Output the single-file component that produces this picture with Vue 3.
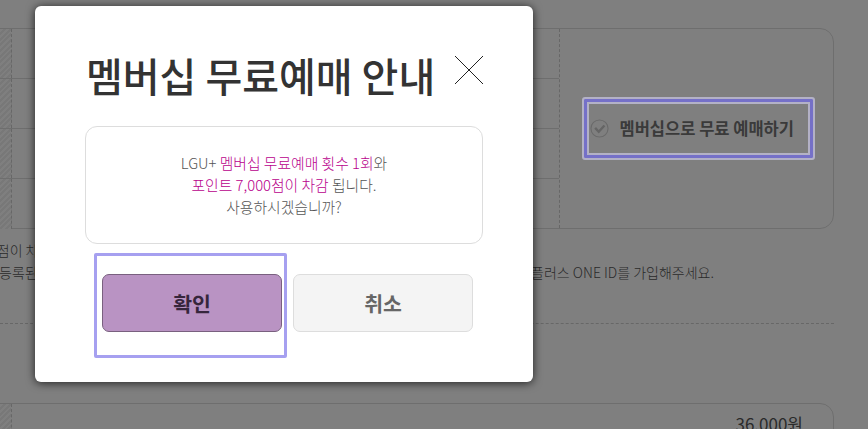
<script setup>
const rows = [0, 1, 2, 3]
</script>

<template>
  <div class="page">
    <section class="card top-card">
      <div class="table-col">
        <div v-for="r in rows" :key="r" class="row">
          <span class="hatch"></span>
          <span class="cell"></span>
        </div>
      </div>
      <div class="action-col">
        <button class="member-btn" type="button">
          <svg class="check" width="19" height="19" viewBox="0 0 20 20" fill="none">
            <circle cx="10" cy="10" r="9" stroke="#d4d4d4" stroke-width="1.2" />
            <path d="M5.4 9.4 L9.2 13.4 L15.2 6.8" stroke="#cacaca" stroke-width="2.6" />
          </svg>
          <span>멤버십으로 무료 예매하기</span>
        </button>
      </div>
    </section>

    <div class="notes">
      <p class="note-first">사용점이 차감됩니다.</p>
      <p class="note-second">
        <span>등록된 정보가 없는 경우</span>
        <span>엘지유플러스 ONE ID를 가입해주세요.</span>
      </p>
    </div>

    <div class="divider"></div>

    <section class="card price-card">
      <span class="hatch short"></span>
      <span class="price">36,000원</span>
    </section>

    <div class="backdrop"></div>

    <div class="modal">
      <header class="modal-head">
        <h2>멤버십 무료예매 안내</h2>
        <svg class="close" width="30" height="30" viewBox="0 0 30 30" fill="none">
          <path d="M1 1 L29 29 M29 1 L1 29" stroke="#222" stroke-width="1" />
        </svg>
      </header>
      <div class="message">
        <p>LGU+ <em>멤버십 무료예매 횟수 1회</em>와</p>
        <p><em>포인트 7,000점이 차감</em> 됩니다.</p>
        <p>사용하시겠습니까?</p>
      </div>
      <div class="actions">
        <div class="focus-ring">
          <button class="btn confirm" type="button">확인</button>
        </div>
        <button class="btn cancel" type="button">취소</button>
      </div>
    </div>
  </div>
</template>

<style>
html, body { margin: 0; background: #808080; }
</style>

<style scoped>
.page {
  position: relative;
  width: 868px;
  height: 429px;
  overflow: hidden;
  background: #fff;
  font-family: "Noto Sans CJK KR", "Noto Sans", sans-serif;
  color: #333;
  padding-top: 28px;
  box-sizing: border-box;
}
.card {
  box-sizing: border-box;
  width: 854px;
  margin-left: -20px;
  border: 1px solid #dcdcdc;
  border-radius: 14px;
}
.top-card {
  display: flex;
  height: 201px;
}
.table-col {
  width: 578px;
  flex: none;
}
.row {
  display: flex;
  height: 50px;
  box-sizing: border-box;
  border-bottom: 1px solid #dcdcdc;
}
.row:last-child { border-bottom: 0; }
.hatch {
  width: 30px;
  flex: none;
  border-right: 1px dashed #cfcfcf;
  background: repeating-linear-gradient(135deg, #f0f0f0 0 2px, #fff 2px 4px);
}
.cell { flex: 1; }
.action-col {
  flex: 1;
  display: flex;
  align-items: center;
  justify-content: center;
  border-left: 1px dashed #cfcfcf;
  padding-left: 3px;
}
.member-btn {
  position: relative;
  display: flex;
  align-items: center;
  gap: 11px;
  box-sizing: border-box;
  width: 219px;
  height: 49px;
  margin-top: -1px;
  padding: 0 0 0 1px;
  background: #fff;
  border: 0;
  font: 700 16.5px "Noto Sans CJK KR", sans-serif;
  color: #747474;
}
.member-btn::after {
  content: "";
  position: absolute;
  inset: -7px;
  z-index: 2;
  border: 2px solid #b3b1c6;
  border-radius: 3px;
  box-shadow: inset 0 0 0 3px #7570c8, inset 0 0 0 5px #b3b1c6;
}
.check { flex: none; }
.notes {
  margin: 10px 0 0;
  font-size: 14px;
  font-weight: 300;
  color: #555;
  line-height: 22px;
}
.notes p { margin: 0; white-space: nowrap; }
.note-first { margin-left: -29px !important; }
.note-second {
  display: flex;
  justify-content: space-between;
  width: 715px;
  margin-left: -1px !important;
}
.divider {
  margin-top: 40px;
  width: 834px;
  border-top: 1px dashed #cfcfcf;
}
.price-card {
  position: relative;
  display: flex;
  justify-content: flex-end;
  margin-top: 79px;
  height: 100px;
  padding: 7px 30px 0 0;
}
.hatch.short {
  position: absolute;
  left: 0;
  top: 0;
  height: 100px;
}
.price {
  font-size: 17px;
  font-weight: 400;
  color: #555;
}
.backdrop {
  position: absolute;
  inset: 0;
  z-index: 1;
  background: rgba(0, 0, 0, 0.5);
}
.modal {
  position: absolute;
  z-index: 3;
  left: 35px;
  top: 6px;
  width: 498px;
  height: 376px;
  box-sizing: border-box;
  padding: 0 50px;
  background: #fff;
  border-radius: 6px;
  box-shadow: 0 1px 10px rgba(0, 0, 0, 0.75);
}
.modal-head {
  display: flex;
  align-items: flex-start;
  justify-content: space-between;
  height: 120px;
}
.modal-head h2 {
  margin: 36px 0 0 1px;
  font-size: 40px;
  line-height: 66px;
  font-weight: 500;
  color: #333;
  white-space: nowrap;
}
.close {
  flex: none;
  margin-top: 49px;
  margin-right: -1px;
}
.message {
  box-sizing: border-box;
  height: 118px;
  padding-top: 25px;
  border: 1px solid #ddd;
  border-radius: 12px;
  text-align: center;
  font-size: 14.8px;
  font-weight: 300;
  line-height: 22.2px;
  color: #555;
}
.message p { margin: 0; }
.message em {
  font-style: normal;
  color: #b8008c;
}
.actions {
  display: flex;
  align-items: flex-start;
  gap: 11px;
  margin: 30px 0 0 17px;
}
.focus-ring { flex: none; position: relative; width: 180px; }
.focus-ring::after {
  content: "";
  position: absolute;
  left: -8px;
  top: -21px;
  width: 193px;
  height: 105px;
  box-sizing: border-box;
  border: 3px solid #a6a0f0;
  border-radius: 2px;
}
.btn {
  display: block;
  width: 180px;
  height: 58px;
  padding: 0;
  border-radius: 7px;
  font: 700 20.5px "Noto Sans CJK KR", sans-serif;
}
.confirm {
  background: #b993c3;
  border: 1px solid #79607f;
  color: #36263c;
}
.cancel {
  background: #f4f4f4;
  border: 1px solid #ddd;
  color: #666;
}
</style>
